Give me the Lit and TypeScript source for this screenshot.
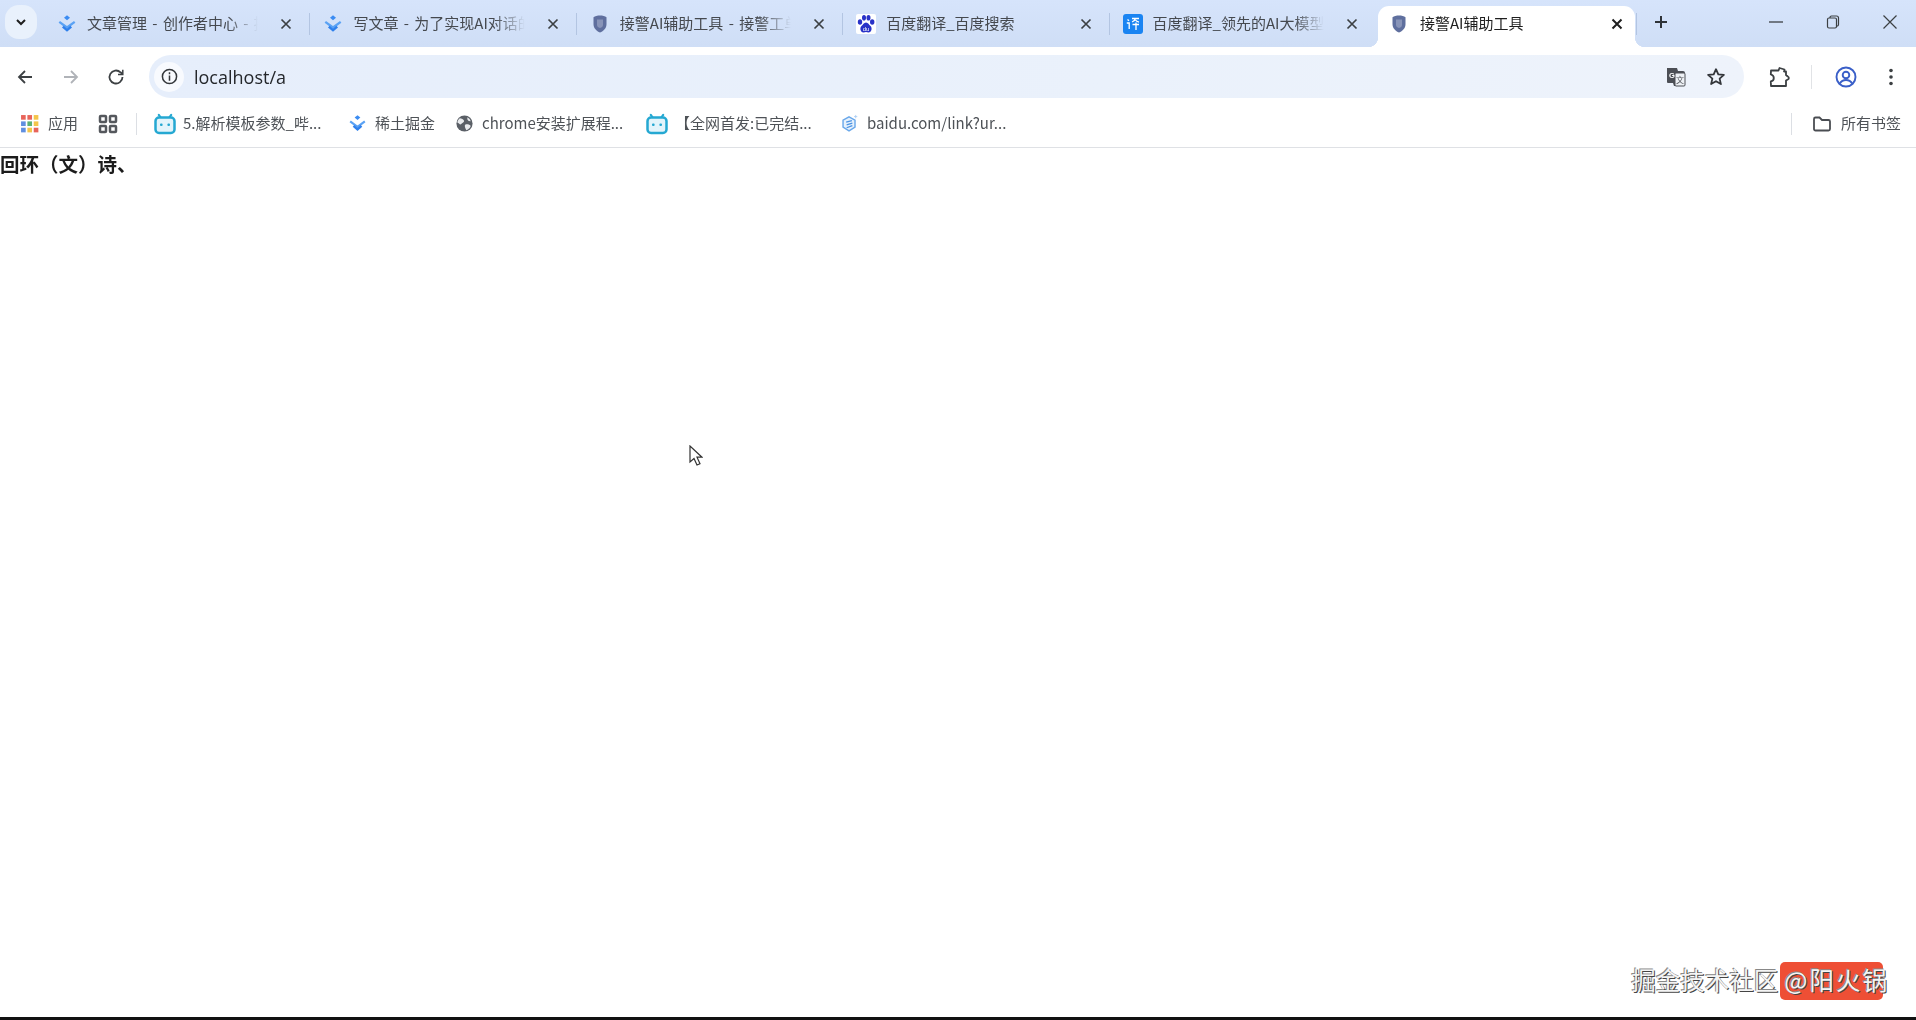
import { LitElement, html, css, svg } from "lit";
import { customElement } from "lit/decorators.js";

const juejin = svg`<svg viewBox="0 0 20 20" width="20" height="20" fill="none"><path d="M10 1.200l3 2.500-3 2.500-3-2.500z" fill="#3b8cf2"/><path d="M2.300 7.800L10 13.500l7.700-5.700" stroke="#5aa2f4" stroke-width="2.300"/><path d="M5.800 12.600L10 16.200l4.200-3.600" stroke="#2f80ec" stroke-width="2.500"/></svg>`;
const shield = svg`<svg viewBox="0 0 20 20" width="20" height="20"><path d="M10 1.500c2.600 0 5 .7 6.500 1.700v6.800c0 4.200-3 7-6.500 8.500-3.500-1.500-6.500-4.300-6.500-8.500V3.200C5 2.200 7.400 1.500 10 1.500z" fill="#5f6f9e"/><path d="M7 5.500h6v5.500c0 1.500-1.300 2.500-3 3-1.700-.5-3-1.500-3-3z" fill="#8894b8"/></svg>`;
const paw = svg`<svg viewBox="0 0 20 20" width="20" height="20" fill="#2932c8"><rect width="20" height="20" rx="2" fill="#fff"/><ellipse cx="4" cy="8" rx="2.200" ry="2.800"/><ellipse cx="8" cy="3.800" rx="2" ry="2.800"/><ellipse cx="12.500" cy="3.800" rx="2" ry="2.800"/><ellipse cx="16.200" cy="8" rx="2.200" ry="2.800"/><path d="M10 8.500c2.200 0 3 2.300 4.500 3.600 2 1.800 1.200 6.400-2 6.400-1 0-1.700-.4-2.500-.4s-1.500.4-2.500.4c-3.200 0-4-4.600-2-6.400C7 10.800 7.800 8.500 10 8.500z"/><text x="10" y="16.500" font-size="6" fill="#fff" text-anchor="middle" font-family="Liberation Sans">du</text></svg>`;
const fanyi = svg`<svg viewBox="0 0 20 20" width="20" height="20"><rect width="20" height="20" rx="3" fill="#1a84f2"/><path d="M4.500 5.500l1.500 1.300M3.800 9h2.400v6M9 4.500h7M12.500 4.500c-.4 1.600-2 3-3.500 3.500M12.500 6c.6 1 2 1.800 3.500 2.200M9.500 10.500h6.500M13 8.500V16" stroke="#fff" stroke-width="1.300" fill="none"/></svg>`;
const bili = svg`<svg viewBox="0 0 22 22" width="22" height="22" fill="none"><path d="M7 5L4.800 1.800M15 5l2.200-3.200" stroke="#25a8d2" stroke-width="2.200" stroke-linecap="round"/><rect x="1.500" y="4.600" width="19" height="15.400" rx="3.500" stroke="#25a8d2" stroke-width="2.500" fill="#e3f4fb"/><rect x="6" y="10.500" width="2.600" height="2.600" rx="1" fill="#25a8d2"/><rect x="13.400" y="10.500" width="2.600" height="2.600" rx="1" fill="#25a8d2"/></svg>`;
const globe = svg`<svg viewBox="0 0 20 20" width="20" height="20"><circle cx="10" cy="10" r="8.500" fill="#5a5f66"/><path d="M5 4.500c2 .3 4 1 4.500 2.500S7.500 9 6.500 10.500 4 9.500 2.500 9C2.700 7.200 3.500 5.700 5 4.500zM11 11c2-.5 5 .3 5.500 1.500-.6 2-2.300 3.800-4.500 4.500-1-1.500-2.500-5.200-1-6zM13 3.500c1.500.8 3 2.200 3.500 4-1.500.3-3-.5-3.500-2z" fill="#e8eaed"/></svg>`;
const hex = svg`<svg viewBox="0 0 20 20" width="20" height="20" fill="none"><path d="M9.500 3l6.300 3.500v7.400l-6.300 3.800-6.300-3.800V6.500z" stroke="#6aa8ea" stroke-width="1.500" fill="#e6f1fc"/><path d="M6.500 8.500L12.500 7M7 11.500l6-1.800M7 14.500l6-2.300" stroke="#4b93e4" stroke-width="1.300"/><path d="M16.500 1v3.500M14.800 2.700h3.400" stroke="#a9cdf3" stroke-width=".9"/></svg>`;
const apps = svg`<svg viewBox="0 0 18 18" width="18" height="18">${[
  ["#e8645a", "#e8645a", "#f4c54a"], ["#5f8fe0", "#5bb074", "#f4c54a"], ["#5f8fe0", "#f4c54a", "#e8645a"],
].map((r, y) => r.map((c, x) => svg`<rect x=${1 + x * 6} y=${1 + y * 6} width="4.400" height="4.400" fill=${c}/>`))}</svg>`;
const grid = svg`<svg viewBox="0 0 20 20" width="20" height="20" fill="none" stroke="#55585d" stroke-width="2.500"><rect x="2" y="2" width="6" height="6" rx=".8"/><rect x="12" y="2" width="6" height="6" rx=".8"/><rect x="2" y="12" width="6" height="6" rx=".8"/><rect x="12" y="12" width="6" height="6" rx=".8"/></svg>`;
const closeX = svg`<svg viewBox="0 0 12 12" width="12" height="12" stroke="#3c4043" stroke-width="1.700" fill="none"><path d="M1.500 1.500l9 9M10.500 1.500l-9 9"/></svg>`;
const closeXDark = svg`<svg viewBox="0 0 12 12" width="12" height="12" stroke="#1f1f1f" stroke-width="2" fill="none"><path d="M1.500 1.500l9 9M10.500 1.500l-9 9"/></svg>`;

const tabs = [
  { icon: juejin, title: "文章管理 - 创作者中心 - 掘" },
  { icon: juejin, title: "写文章 - 为了实现AI对话的" },
  { icon: shield, title: "接警AI辅助工具 - 接警工单" },
  { icon: paw, title: "百度翻译_百度搜索" },
  { icon: fanyi, title: "百度翻译_领先的AI大模型" },
  { icon: shield, title: "接警AI辅助工具", active: true },
];

const marks = [
  { icon: bili, text: "5.解析模板参数_哔...", cls: "w1" },
  { icon: juejin, text: "稀土掘金", cls: "w2" },
  { icon: globe, text: "chrome安装扩展程...", cls: "w3" },
  { icon: bili, text: "【全网首发:已完结...", cls: "w4" },
  { icon: hex, text: "baidu.com/link?ur...", cls: "w5" },
];

@customElement("app-root")
export class AppRoot extends LitElement {
  static styles = css`
    :host {
      display: flex;
      flex-direction: column;
      position: relative;
      width: 1916px;
      height: 1020px;
      overflow: hidden;
      background: #fff;
      font-family: "Noto Sans CJK SC", "Liberation Sans", sans-serif;
      color: #1f1f1f;
    }
    svg { display: block; flex: none; }
    .chrome { filter: blur(0.5px); flex: none; }
    .strip {
      height: 47px;
      box-sizing: border-box;
      padding-top: 6px;
      display: flex;
      background: linear-gradient(#d6e4fb, #cfdef6);
    }
    .tablist {
      width: 42px;
      flex: none;
      display: flex;
      justify-content: center;
      align-items: flex-start;
    }
    .tablist div {
      width: 32px;
      height: 34px;
      margin-top: -1px;
      border-radius: 14px;
      background: #e9f1fc;
      display: flex;
      align-items: center;
      justify-content: center;
    }
    .tab {
      width: 266.4px;
      flex: none;
      box-sizing: border-box;
      height: 41px;
      padding: 0 10px 5px 15px;
      display: flex;
      align-items: center;
      gap: 10px;
      position: relative;
      font-size: 15px;
      word-spacing: 2px;
      color: #45494f;
    }
    .tab .title {
      flex: 1;
      min-width: 0;
      white-space: nowrap;
      margin-bottom: 4px;
      -webkit-mask-image: linear-gradient(90deg, #000 calc(100% - 36px), transparent calc(100% - 6px));
      mask-image: linear-gradient(90deg, #000 calc(100% - 36px), transparent calc(100% - 6px));
    }
    .tab.active .title {
      margin-left: 1px;
      -webkit-mask-image: none;
      mask-image: none;
    }
    .tab .x {
      width: 24px;
      height: 24px;
      display: flex;
      align-items: center;
      justify-content: center;
      flex: none;
    }
    .tab .sep {
      position: absolute;
      right: -2px;
      top: 7px;
      width: 1px;
      height: 22px;
      background: #b3c5e2;
    }
    .tab.last .sep { display: none; }
    .tab.active {
      color: #1f1f1f;
      width: 257px;
      margin-left: 4px;
      padding-left: 11px;
      padding-right: 6px;
      background: #fff;
      border-radius: 11px 11px 0 0;
    }
    .tab.active::before, .tab.active::after {
      content: "";
      position: absolute;
      bottom: 0;
      width: 10px;
      height: 10px;
    }
    .tab.active::before { left: -10px; background: radial-gradient(circle at 0 0, transparent 10px, #fff 10.500px); }
    .tab.active::after { right: -10px; background: radial-gradient(circle at 100% 0, transparent 10px, #fff 10.500px); }
    .plus {
      flex: none;
      width: 24px;
      height: 32px;
      margin: 0 0 0 14px;
      display: flex;
      align-items: center;
      justify-content: center;
    }
    .gap { flex: 1; }
    .win {
      flex: none;
      width: 57px;
      height: 32px;
      display: flex;
      align-items: center;
      justify-content: center;
    }
    .win:last-child { margin-right: -2px; }
    .toolbar {
      height: 56px;
      box-sizing: border-box;
      padding: 8px 0 5px 0;
      display: flex;
      align-items: center;
      background: #fff;
    }
    .nav {
      flex: none;
      width: 46px;
      height: 36px;
      display: flex;
      align-items: center;
      justify-content: center;
    }
    .first { margin-left: 2px; }
    .second { width: 45px; }
    .omni {
      flex: none;
      width: 1595px;
      height: 43px;
      margin-left: 10px;
      box-sizing: border-box;
      border-radius: 22px;
      padding: 0 8px 0 6px;
      display: flex;
      align-items: center;
      background: linear-gradient(90deg, #e6eefb, #eaf1fb 60%, #eef3fb);
    }
    .info {
      flex: none;
      width: 30px;
      height: 30px;
      border-radius: 50%;
      background: #f8fafe;
      display: flex;
      align-items: center;
      justify-content: center;
      margin-left: -1px;
    }
    .url {
      margin-left: 10px;
      font: 18px "Open Sans", "Liberation Sans", sans-serif;
      color: #24272b;
      flex: 1;
    }
    .omni-btn { flex: none; width: 40px; display: flex; justify-content: center; }
    .tools { flex: 1; display: flex; align-items: center; padding-left: 15px; }
    .tools .ext { width: 40px; display: flex; justify-content: center; flex: none; }
    .tools .vsep { width: 1px; height: 24px; background: #e1e3e6; margin: 0 14px 0 12px; flex: none; }
    .tools .prof { width: 40px; display: flex; justify-content: center; flex: none; }
    .tools .menu { width: 50px; display: flex; justify-content: center; flex: none; }
    .marks {
      height: 45px;
      box-sizing: border-box;
      border-bottom: 1px solid #dfe1e5;
      display: flex;
      align-items: center;
      padding: 0 0 3px 20px;
      background: #fff;
      font-size: 15px;
      color: #4e5257;
    }
    .mark { display: flex; align-items: center; gap: 8px; white-space: nowrap; flex: none; }
    .mark span { margin-bottom: 3px; }
    .mark svg { width: 19px; height: 19px; }
    .bili svg { width: 22px; height: 22px; margin-left: -2px; }
    .bili { gap: 7px; }
    .apps { width: 78px; gap: 9px; }
    .gridbtn { width: 38px; display: flex; }
    .vs { width: 1px; height: 22px; background: #dcdfe4; flex: none; margin-right: 19px; }
    .w1 { width: 192px; }
    .w2 { width: 107px; }
    .w3 { width: 193px; }
    .w4 { width: 192px; }
    .w5 { width: 160px; }
    .grow { flex: 1; }
    .vs.r { margin-right: 20px; }
    .all { gap: 9px; }
    .all svg { width: 20px; height: 20px; }
    .tail { width: 15px; flex: none; }
    .content {
      flex: 1;
      min-height: 0;
      font-size: 19.500px;
      font-weight: 700;
      line-height: 30px;
      color: #1c1c1c;
      padding-top: 1px;
      filter: blur(0.4px);
    }
    .bar { height: 3px; flex: none; background: #111; }
    .cursor { position: absolute; left: 689px; top: 445px; }
    .wm {
      position: absolute;
      right: 27px;
      top: 962px;
      height: 38px;
      display: flex;
      align-items: center;
      font-size: 24.500px;
      color: #f4f4f4;
      text-shadow: 1px 1px 0 #444, -1px -1px 0 #888;
      white-space: nowrap;
    }
    .wm .label { margin-bottom: 4px; }
    .wm .badge {
      position: relative;
      margin-left: 2px;
      padding-left: 4px;
      height: 38px;
      display: flex;
      align-items: center;
      letter-spacing: 2px;
    }
    .wm .badge::before {
      content: "";
      position: absolute;
      left: 0;
      right: 6px;
      top: 0;
      bottom: 0;
      border-radius: 5px;
      background: #ee4f35;
    }
    .wm .badge span { position: relative; margin-bottom: 4px; }
  `;

  render() {
    return html`
      <div class="chrome">
        <div class="strip">
          <div class="tablist"><div>
            <svg viewBox="0 0 12 12" width="12" height="12" fill="none" stroke="#1f1f1f" stroke-width="2"><path d="M2 4l4 4 4-4"/></svg>
          </div></div>
          ${tabs.map((t, i) => html`
            <div class="tab ${t.active ? "active" : ""} ${i === 4 ? "last" : ""}">
              ${t.icon}
              <div class="title">${t.title}</div>
              <div class="x">${t.active ? closeXDark : closeX}</div>
              <div class="sep"></div>
            </div>`)}
          <div class="plus">
            <svg viewBox="0 0 14 14" width="14" height="14" stroke="#2f3338" stroke-width="2" fill="none"><path d="M7 1v12M1 7h12"/></svg>
          </div>
          <div class="gap"></div>
          <div class="win"><svg viewBox="0 0 14 14" width="14" height="14" stroke="#3c4043" stroke-width="1.300"><path d="M0 7h14"/></svg></div>
          <div class="win"><svg viewBox="0 0 14 14" width="14" height="14" stroke="#3c4043" stroke-width="1.200" fill="none"><rect x="1.500" y="3" width="9" height="10" rx="1.500"/><path d="M4 3V2.500A1.500 1.500 0 0 1 5.500 1h5A2 2 0 0 1 12.500 3v6.500A1.500 1.500 0 0 1 11 11h-.5"/></svg></div>
          <div class="win"><svg viewBox="0 0 14 14" width="14" height="14" stroke="#3c4043" stroke-width="1.200" fill="none"><path d="M0.500 0.500l13 13M13.500 0.500l-13 13"/></svg></div>
        </div>
        <div class="toolbar">
          <div class="nav first"><svg viewBox="0 0 16 16" width="16" height="16" fill="none" stroke="#3c4043" stroke-width="1.800"><path d="M15 8H2M8 2L2 8l6 6"/></svg></div>
          <div class="nav second"><svg viewBox="0 0 16 16" width="16" height="16" fill="none" stroke="#b0b3b8" stroke-width="1.800"><path d="M1 8h13M8 2l6 6-6 6"/></svg></div>
          <div class="nav"><svg viewBox="0 0 18 18" width="18" height="18" fill="none" stroke="#3c4043" stroke-width="1.800"><path d="M15.500 9a6.500 6.500 0 1 1-2-4.700L15.500 6"/><path d="M15.800 1.800V6.500H11" stroke-width="1.500"/></svg></div>
          <div class="omni">
            <div class="info"><svg viewBox="0 0 18 18" width="17" height="17" fill="none" stroke="#33363a" stroke-width="1.600"><circle cx="9" cy="9" r="7.500"/><path d="M9 8v5.500M9 4.500v2"/></svg></div>
            <div class="url">localhost/a</div>
            <div class="omni-btn"><svg viewBox="0 0 22 22" width="22" height="22"><path d="M2 2h10l1 3h5a2 2 0 0 1 2 2v11a2 2 0 0 1-2 2H9l-1-3H3a1 1 0 0 1-1-1z" fill="#4c4f55"/><rect x="10" y="7" width="10" height="13" rx="1" fill="#eef1f5" stroke="#4c4f55"/><text x="7" y="12" font-size="7.500" fill="#fff" text-anchor="middle" font-family="Liberation Sans" font-weight="700">G</text><text x="15" y="16.500" font-size="8" fill="#4c4f55" text-anchor="middle" font-family="Noto Sans CJK SC">文</text></svg></div>
            <div class="omni-btn"><svg viewBox="0 0 20 20" width="20" height="20" fill="none" stroke="#33363a" stroke-width="1.800" stroke-linejoin="round"><path d="M10 2.200l2.300 5.200 5.600.5-4.300 3.700 1.300 5.500L10 14.200 5.100 17.100l1.300-5.500L2.100 7.900l5.600-.5z"/></svg></div>
          </div>
          <div class="tools">
            <div class="ext"><svg viewBox="0 0 22 22" width="22" height="22" fill="none" stroke="#3c4043" stroke-width="1.800" stroke-linejoin="round"><path d="M3 4.500h7.500L11.500 2l5 1.500L16 5.500h2V9l1.800 1.500a1.600 1.600 0 0 1 0 3L18 14.500V20H3l-.2-4.500c2.500-.5 3-1.500 3-3.500s-1-3-3-3.500z"/></svg></div>
            <div class="vsep"></div>
            <div class="prof"><svg viewBox="0 0 22 22" width="22" height="22" fill="none" stroke="#3a5fc8" stroke-width="1.900"><circle cx="11" cy="11" r="9.500"/><circle cx="11" cy="9" r="3.300"/><path d="M4.800 17.500c1.500-2.500 3.700-3.500 6.200-3.500s4.700 1 6.200 3.500"/></svg></div>
            <div class="menu"><svg viewBox="0 0 6 20" width="6" height="20" fill="#3c4043"><circle cx="3" cy="3.500" r="1.800"/><circle cx="3" cy="10" r="1.800"/><circle cx="3" cy="16.500" r="1.800"/></svg></div>
          </div>
        </div>
        <div class="marks">
          <div class="mark apps">${apps}<span>应用</span></div>
          <div class="gridbtn">${grid}</div>
          <div class="vs"></div>
          ${marks.map((m) => html`<div class="mark ${m.cls} ${m.icon === bili ? "bili" : ""}">${m.icon}<span>${m.text}</span></div>`)}
          <div class="grow"></div>
          <div class="vs r"></div>
          <div class="mark all"><svg viewBox="0 0 20 20" fill="none" stroke="#4a4d52" stroke-width="1.800"><path d="M2 5a1.500 1.500 0 0 1 1.500-1.500h4L10 6h6.500A1.500 1.500 0 0 1 18 7.500v7.500a1.500 1.500 0 0 1-1.500 1.500h-13A1.500 1.500 0 0 1 2 15z"/></svg><span>所有书签</span></div>
          <div class="tail"></div>
        </div>
      </div>
      <div class="content">回环（文）诗、</div>
      <div class="bar"></div>
      <div class="cursor"><svg viewBox="0 0 14 22" width="14" height="22"><path d="M1 1v16l4-3.500 3 6.500 3-1.300-3-6.500h5z" fill="#fff" stroke="#333" stroke-width="1.200"/></svg></div>
      <div class="wm"><span class="label">掘金技术社区</span><div class="badge"><span>@阳火锅</span></div></div>
    `;
  }
}
